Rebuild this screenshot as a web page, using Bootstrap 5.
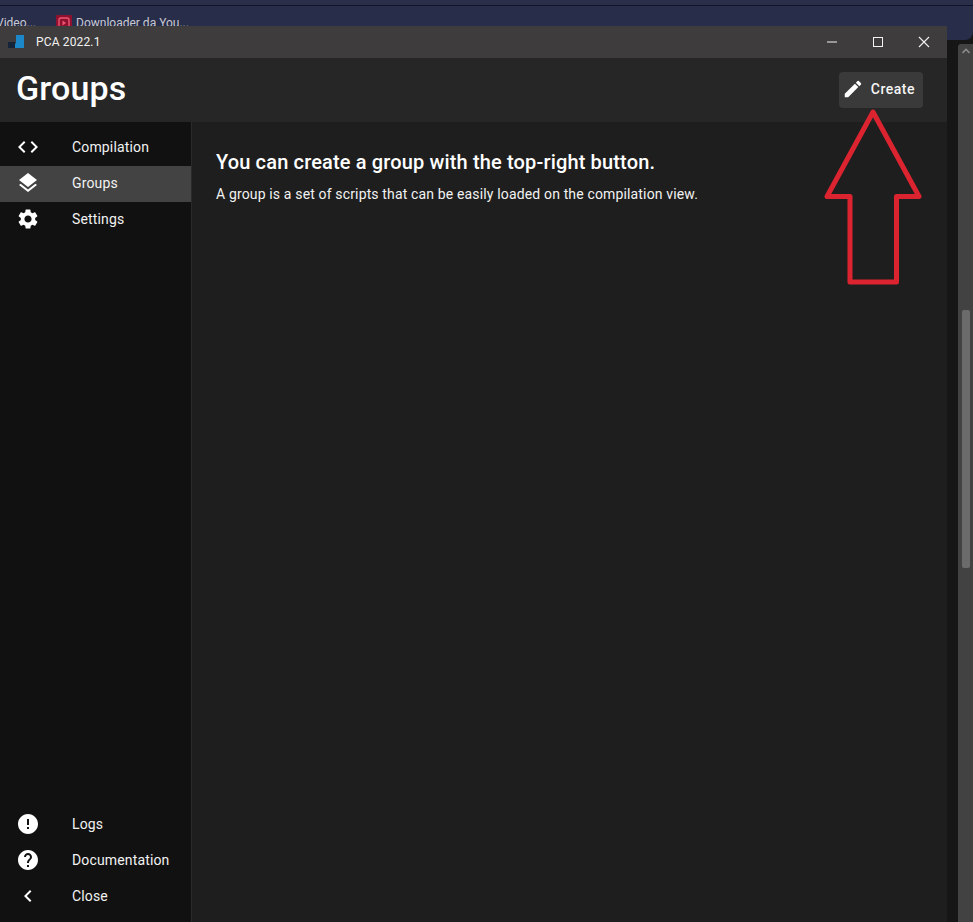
<!DOCTYPE html>
<html lang="en">
<head>
    <meta charset="UTF-8">
    <meta name="viewport" content="width=device-width, initial-scale=1.0">
    <title>PCA 2022.1</title>
    <link rel="stylesheet" href="https://cdn.jsdelivr.net/npm/bootstrap@5.3.0/dist/css/bootstrap.min.css">
    <style>
        html, body {
            height: 100%;
        }
        body {
            background-color: #14161f;
            font-family: Roboto, "Liberation Sans", sans-serif;
            color: #f2f2f2;
            overflow: hidden;
            letter-spacing: .15px;
        }
        .browser-strip {
            height: 21px;
            background-color: #282d4a;
            border-top: 1px solid #12142a;
            font-size: 12px;
            letter-spacing: 0;
            color: #c9c9cf;
            overflow: hidden;
            white-space: nowrap;
        }
        .strip-top {
            height: 5px;
            background-color: #2a2e48;
        }
        .cut-label {
            margin-left: -4px;
            padding-top: 8px;
        }
        .browser-tab {
            margin-left: 20px;
            padding-top: 8px;
        }
        .tab-mark {
            width: 16px;
            height: 16px;
            margin-top: 1px;
            margin-right: 4px;
            flex-shrink: 0;
        }
        .app-window {
            width: 947px;
            height: 896px;
        }
        .title-bar {
            height: 32px;
            background-color: #3e3c3c;
            font-size: 12px;
            padding-left: 8px;
        }
        .app-title {
            margin-left: 12px;
        }
        .win-btn {
            width: 46px;
            height: 32px;
        }
        .page-head {
            height: 64px;
            background-color: #262626;
            padding: 0 24px 0 16px;
        }
        .page-head h1 {
            font-size: 34px;
            font-weight: 500;
            color: #fff;
            margin: 0;
            padding-bottom: 4px;
        }
        .create-btn {
            height: 36px;
            padding: 0 8px 2px 3px;
            gap: 7px;
            background-color: #3a3a3a;
            color: #f5f5f5;
            font-size: 14px;
            font-weight: 500;
            letter-spacing: .5px;
            border: 0;
            border-radius: 4px;
        }
        .side-menu {
            width: 192px;
            background-color: #111111;
            border-right: 1px solid #2a2a2a;
            padding: 8px 0 7px;
            font-size: 14px;
        }
        .side-item {
            height: 36px;
            padding-left: 16px;
            padding-bottom: 2px;
            color: #f2f2f2;
            text-decoration: none;
        }
        .side-item:hover {
            color: #f2f2f2;
        }
        .side-item svg {
            width: 24px;
            height: 24px;
            margin-right: 32px;
            fill: #fff;
        }
        .side-item.active-item {
            background-color: #444343;
        }
        .main-pane {
            background-color: #1e1e1e;
            padding: 24px;
        }
        .main-pane h2 {
            font-size: 20px;
            font-weight: 500;
            line-height: 32px;
            color: #fff;
            margin: 0 0 6px;
        }
        .main-pane p {
            font-size: 14px;
            line-height: 20px;
            margin: 0;
        }
        .outer-column {
            background-color: #161616;
        }
        .outer-blue {
            height: 14px;
            background-color: #282d4a;
            border-bottom-right-radius: 8px;
        }
        .outer-gap {
            padding-left: 11px;
            margin-top: 4px;
        }
        .outer-track {
            background-color: #424242;
            padding: 3px 3px 0 4px;
            border-top-left-radius: 3px;
        }
        .track-chevron {
            display: block;
            width: 8px;
            height: 8px;
        }
        .scroll-thumb {
            height: 258px;
            margin-top: 255px;
            border-radius: 2px;
            background-color: #6b6b6b;
        }
        .red-arrow {
            position: absolute;
            top: 106px;
            left: 822px;
            width: 102px;
            height: 182px;
        }
    </style>
</head>
<body>
    <div class="strip-top"></div>
    <div class="browser-strip d-flex">
        <span class="cut-label">Video...</span>
        <span class="browser-tab d-flex">
            <svg class="tab-mark" viewBox="0 0 16 16">
                <rect width="16" height="16" rx="1" fill="#8e1230"/>
                <rect x="3" y="3" width="10" height="10" rx="2" fill="none" stroke="#ee5570" stroke-width="1.4"/>
                <path d="M6.5 5.5v5l3.5-2.5z" fill="#ee5570"/>
            </svg>
            Downloader da You...
        </span>
    </div>

    <div class="d-flex">
        <div class="app-window d-flex flex-column flex-shrink-0">
            <div class="title-bar d-flex align-items-center flex-shrink-0">
                <svg width="16" height="16" viewBox="0 0 16 16">
                    <path d="M8 1h8v13H3l5-5z" fill="#1c87c9"/>
                    <rect x="0" y="8" width="7" height="6" fill="#16243a"/>
                </svg>
                <span class="app-title">PCA 2022.1</span>
                <div class="ms-auto d-flex">
                    <div class="win-btn d-flex align-items-center justify-content-center">
                        <svg width="12" height="12" viewBox="0 0 12 12"><path d="M1 6h10" stroke="#f2f2f2" stroke-width="1"/></svg>
                    </div>
                    <div class="win-btn d-flex align-items-center justify-content-center">
                        <svg width="12" height="12" viewBox="0 0 12 12"><rect x="1.5" y="1.5" width="9" height="9" fill="none" stroke="#f2f2f2"/></svg>
                    </div>
                    <div class="win-btn d-flex align-items-center justify-content-center">
                        <svg width="12" height="12" viewBox="0 0 12 12"><path d="M1 1l10 10M11 1L1 11" stroke="#f2f2f2" stroke-width="1.1"/></svg>
                    </div>
                </div>
            </div>

            <div class="page-head d-flex align-items-center justify-content-between flex-shrink-0">
                <h1>Groups</h1>
                <button class="create-btn d-flex align-items-center" type="button">
                    <svg width="22" height="22" viewBox="0 0 24 24" fill="#fff"><path d="M3 17.25V21h3.75L17.81 9.94l-3.75-3.75L3 17.25zM20.71 7.04a1 1 0 0 0 0-1.41l-2.34-2.34a1 1 0 0 0-1.41 0l-1.83 1.83 3.75 3.75 1.83-1.83z"/></svg>
                    Create
                </button>
            </div>

            <div class="d-flex flex-grow-1">
                <nav class="side-menu d-flex flex-column flex-shrink-0">
                    <a class="side-item d-flex align-items-center" href="#">
                        <svg viewBox="0 0 24 24"><path d="M9.4 16.6 4.8 12l4.6-4.6L8 6l-6 6 6 6 1.4-1.4zm5.2 0 4.6-4.6-4.6-4.6L16 6l6 6-6 6-1.4-1.4z"/></svg>
                        Compilation
                    </a>
                    <a class="side-item active-item d-flex align-items-center" href="#">
                        <svg viewBox="0 0 24 24"><path d="m11.99 18.54-7.37-5.73L3 14.07l9 7 9-7-1.63-1.27-7.38 5.74zM12 16l7.36-5.73L21 9l-9-7-9 7 1.63 1.27L12 16z"/></svg>
                        Groups
                    </a>
                    <a class="side-item d-flex align-items-center" href="#">
                        <svg viewBox="0 0 24 24"><path d="M19.14 12.94c.04-.3.06-.61.06-.94 0-.32-.02-.64-.07-.94l2.03-1.58a.49.49 0 0 0 .12-.61l-1.92-3.32a.488.488 0 0 0-.59-.22l-2.39.96c-.5-.38-1.03-.7-1.62-.94l-.36-2.54a.484.484 0 0 0-.48-.41h-3.84c-.24 0-.43.17-.47.41l-.36 2.54c-.59.24-1.13.57-1.62.94l-2.39-.96c-.22-.08-.47 0-.59.22L2.74 8.87c-.12.21-.08.47.12.61l2.03 1.58c-.05.3-.09.63-.09.94s.02.64.07.94l-2.03 1.58a.49.49 0 0 0-.12.61l1.92 3.32c.12.22.37.29.59.22l2.39-.96c.5.38 1.03.7 1.62.94l.36 2.54c.05.24.24.41.48.41h3.84c.24 0 .44-.17.47-.41l.36-2.54c.59-.24 1.13-.56 1.62-.94l2.39.96c.22.08.47 0 .59-.22l1.92-3.32c.12-.22.07-.47-.12-.61l-2.01-1.58zM12 15.6c-1.98 0-3.6-1.62-3.6-3.6s1.62-3.6 3.6-3.6 3.6 1.62 3.6 3.6-1.62 3.6-3.6 3.6z"/></svg>
                        Settings
                    </a>
                    <a class="side-item d-flex align-items-center mt-auto" href="#">
                        <svg viewBox="0 0 24 24"><path d="M12 2C6.48 2 2 6.48 2 12s4.48 10 10 10 10-4.48 10-10S17.52 2 12 2zm1 15h-2v-2h2v2zm0-4h-2V7h2v6z"/></svg>
                        Logs
                    </a>
                    <a class="side-item d-flex align-items-center" href="#">
                        <svg viewBox="0 0 24 24"><path d="M12 2C6.48 2 2 6.48 2 12s4.48 10 10 10 10-4.48 10-10S17.52 2 12 2zm1 17h-2v-2h2v2zm2.07-7.75-.9.92C13.45 12.9 13 13.5 13 15h-2v-.5c0-1.1.45-2.1 1.17-2.83l1.24-1.26c.37-.36.59-.86.59-1.41 0-1.1-.9-2-2-2s-2 .9-2 2H8c0-2.21 1.79-4 4-4s4 1.79 4 4c0 .88-.36 1.68-.93 2.25z"/></svg>
                        Documentation
                    </a>
                    <a class="side-item d-flex align-items-center" href="#">
                        <svg viewBox="0 0 24 24"><path d="M15.41 7.41 14 6l-6 6 6 6 1.41-1.41L10.83 12z"/></svg>
                        Close
                    </a>
                </nav>
                <main class="main-pane flex-grow-1">
                    <h2>You can create a group with the top-right button.</h2>
                    <p>A group is a set of scripts that can be easily loaded on the compilation view.</p>
                </main>
            </div>
        </div>
        <div class="outer-column flex-grow-1 d-flex flex-column">
            <div class="outer-blue flex-shrink-0"></div>
            <div class="outer-gap flex-grow-1 d-flex">
                <div class="outer-track flex-grow-1">
                    <svg class="track-chevron" viewBox="0 0 8 8"><path d="M0.5 6 4 2.5 7.5 6" fill="none" stroke="#8a8a8a" stroke-width="1.6"/></svg>
                    <div class="scroll-thumb"></div>
                </div>
            </div>
        </div>
    </div>

    <svg class="red-arrow" viewBox="0 0 102 182">
        <path d="M51 6 L97 90.5 L74.5 90.5 L74.5 176 L28 176 L28 90.5 L5 90.5 Z" fill="none" stroke="#dc2430" stroke-width="5" stroke-linejoin="round"/>
    </svg>

    <script src="https://cdn.jsdelivr.net/npm/bootstrap@5.3.0/dist/js/bootstrap.bundle.min.js"></script>
</body>
</html>
